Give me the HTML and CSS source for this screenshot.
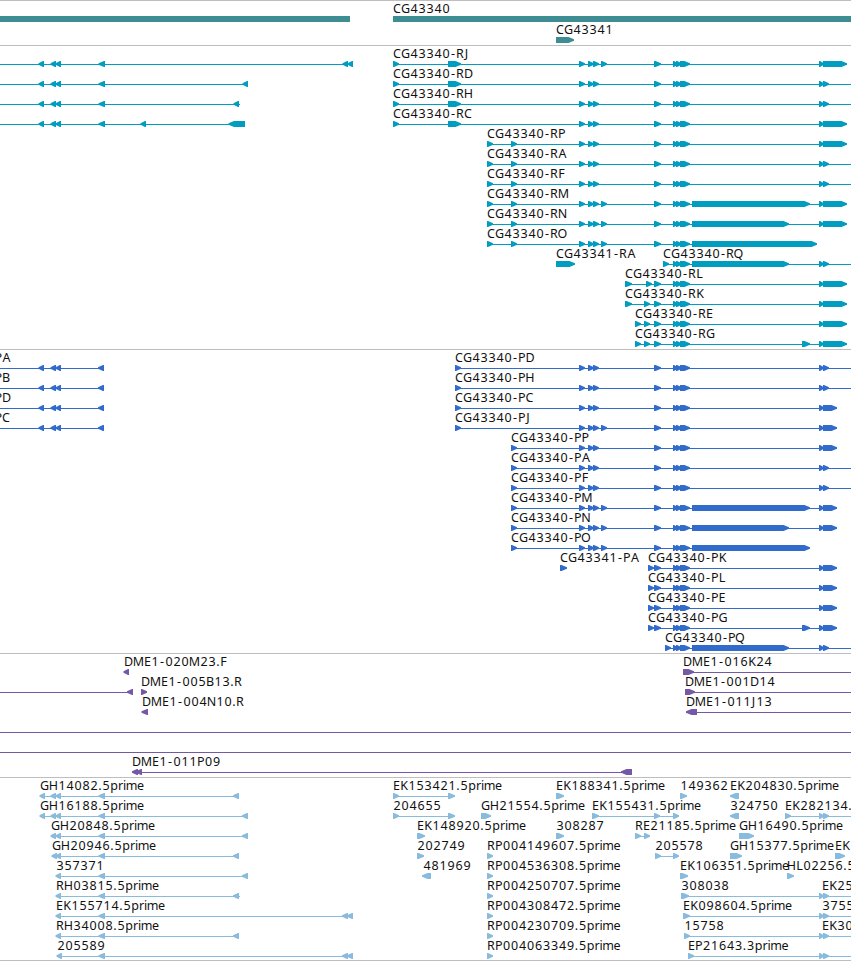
FILE: index.html
```html
<!DOCTYPE html>
<html lang="en">
  <head>
    <meta charset="UTF-8" />
    <meta name="viewport" content="width=device-width, initial-scale=1.0" />
    <title>Genome Browser</title>
    <link rel="stylesheet" href="styles.css">
  </head>
  <body>
    <main class="browser">
      <section class="track track-gene" id="genes"></section>
      <section class="track track-transcript" id="transcripts"></section>
      <section class="track track-cds" id="cds"></section>
      <section class="track track-bac" id="bacs"></section>
      <section class="track track-est" id="ests"></section>
    </main>
    <script src="script.js"></script>
  </body>
</html>
```

FILE: styles.css
```css
* {
  margin: 0;
  padding: 0;
  box-sizing: border-box;
}
body {
  background: #fff;
  overflow: hidden;
}
.browser {
  display: flex;
  flex-direction: column;
  width: 851px;
  height: 961px;
  border-bottom: 1px solid #bebebe;
}
.track {
  flex: none;
  border-top: 1px solid #bebebe;
  overflow: hidden;
}
.track svg {
  display: block;
  width: 100%;
  height: 100%;
}
.track-gene {
  height: 45px;
  color: #3e8d93;
}
.track-transcript {
  height: 304px;
  color: #009dc0;
}
.track-cds {
  height: 304px;
  color: #316ccc;
}
.track-bac {
  height: 124px;
  color: #7558a6;
}
.track-est {
  height: 183px;
  color: #88bbdd;
}
.line,
.block {
  fill: currentColor;
}
.line {
  shape-rendering: crispEdges;
}
.label {
  font-family: "Noto Sans", "Open Sans", sans-serif;
  font-size: 12.5px;
  fill: #111;
  text-anchor: middle;
}
```

FILE: script.js
```js
const SVG_NS = "http://www.w3.org/2000/svg";
const EDGE = 860; // just past the right side of the view

// label cell widths
const WIDTHS = {
  C: 8, G: 9, R: 8, P: 7.5, D: 9, H: 9, J: 5, A: 9, F: 7, M: 11, N: 9, O: 9,
  Q: 9, L: 7, K: 8, E: 7, B: 8, "-": 6, ".": 4, p: 8, r: 5, i: 3, m: 11, e: 7,
};

function add(parent, name, attrs) {
  const node = document.createElementNS(SVG_NS, name);
  for (const key in attrs) node.setAttribute(key, attrs[key]);
  parent.appendChild(node);
  return node;
}

function drawLabel(svg, text, x, top) {
  const xs = [];
  for (const ch of text) {
    const w = WIDTHS[ch] || 8;
    xs.push(x + w / 2);
    x += w;
  }
  add(svg, "text", { class: "label", x: xs.join(" "), y: top + 12 }).textContent = text;
}

// block with a pointed end, dir 1 = right, -1 = left
function drawBlock(svg, a, b, dir, top) {
  const y = top + 15;
  const head = Math.min(5.5, b - a - 1);
  const base = dir > 0 ? a : b;
  const neck = dir > 0 ? b - head : a + head;
  const tip = dir > 0 ? b : a;
  const points = [
    [base, y], [neck, y], [tip, y + 2.3], [tip, y + 3.7], [neck, y + 6], [base, y + 6],
  ];
  add(svg, "polygon", { class: "block", points: points.join(" ") });
}

// rows: list of features [label, start, end, dir, blocks, label x]
function drawTrack(id, rows, step = 20) {
  const svg = add(document.getElementById(id), "svg", {});
  rows.forEach((features, i) => {
    const top = i * step;
    features.forEach(([label, start, end, dir, blocks, labelX = start]) => {
      add(svg, "rect", { class: "line", x: start, y: top + 18, width: end - start, height: 1 });
      blocks.forEach(([a, b]) => drawBlock(svg, a, b, dir, top));
      if (label) drawLabel(svg, label, labelX, top);
    });
  });
}

// exons shared by the CG43340 isoforms
const A = [[579, 585], [588, 594], [593, 599]];
const B = [[601, 607]];
const C = [[654, 661], [673, 678], [676, 682], [680, 690]];
const SMALL = [[819, 824], [823, 829]];
const TAIL = [[819, 824], [823, 847]];
const CDS_TAIL = [[819, 824], [823, 837]];
const J = [[393, 399], [448, 461]];
const P = [[487, 493], [511, 517]];
const LEFT = [[38.5, 44], [50.5, 56], [55.5, 61]];

drawTrack("genes", [
  [["", -10, 350, -1, [[-10, 350]]], ["CG43340", 393, EDGE, 1, [[393, EDGE]]]],
  [["CG43341", 556, 574, 1, [[556, 574]]]],
], 21);

drawTrack("transcripts", [
  [["", -10, 353, -1, [...LEFT, [98.5, 105], [342.5, 348], [347.5, 353]]],
   ["CG43340-RJ", 393, 847, 1, [...J, ...A, ...B, ...C, ...TAIL]]],
  [["", -10, 248, -1, [...LEFT, [98.5, 105], [242.5, 248]]],
   ["CG43340-RD", 393, EDGE, 1, [...J, ...A, ...C, ...SMALL]]],
  [["", -10, 240, -1, [...LEFT, [98.5, 105], [233.5, 239]]],
   ["CG43340-RH", 393, EDGE, 1, [...J, ...A, ...C, ...SMALL]]],
  [["", -10, 245, -1, [...LEFT, [98.5, 105], [140.5, 146], [228.5, 245]]],
   ["CG43340-RC", 393, 847, 1, [...J, ...A, ...C, ...TAIL]]],
  [["CG43340-RP", 487, 846, 1, [...P, ...A, ...C, ...TAIL]]],
  [["CG43340-RA", 487, EDGE, 1, [...P, ...A, ...C, ...SMALL]]],
  [["CG43340-RF", 487, EDGE, 1, [...P, ...A, ...C, ...SMALL]]],
  [["CG43340-RM", 487, 846, 1, [...P, ...A, ...B, ...C, [692, 810], ...TAIL]]],
  [["CG43340-RN", 487, 846, 1, [...P, ...A, ...B, ...C, [692, 789], ...TAIL]]],
  [["CG43340-RO", 487, 816, 1, [...P, ...A, ...B, ...C, [692, 817]]]],
  [["CG43341-RA", 556, 574, 1, [[556, 575]]],
   ["CG43340-RQ", 663, EDGE, 1, [[663, 669], ...C.slice(1), [692, 789], ...SMALL]]],
  [["CG43340-RL", 625, 847, 1, [[625, 632], [646, 652], ...C, ...TAIL]]],
  [["CG43340-RK", 625, 847, 1, [[625, 632], [644, 650], ...C, ...TAIL]]],
  [["CG43340-RE", 635, 847, 1, [[635, 641], [644, 650], ...C, ...TAIL]]],
  [["CG43340-RG", 635, 847, 1, [[635, 641], [644, 650], ...C, [802, 810], ...TAIL]]],
]);

const leftCds = (name) => [name, -10, 104, -1, [...LEFT, [98, 104]], -5.5];

drawTrack("cds", [
  [leftCds("PA"), ["CG43340-PD", 455, EDGE, 1, [[455, 461], ...A, ...C, ...SMALL]]],
  [leftCds("PB"), ["CG43340-PH", 455, EDGE, 1, [[455, 461], ...A, ...C, ...SMALL]]],
  [leftCds("PD"), ["CG43340-PC", 455, 837, 1, [[455, 461], ...A, ...C, ...CDS_TAIL]]],
  [leftCds("PC"), ["CG43340-PJ", 455, 837, 1, [[455, 461], ...A, ...B, ...C, ...CDS_TAIL]]],
  [["CG43340-PP", 511, 837, 1, [[511, 517], ...A, ...C, ...CDS_TAIL]]],
  [["CG43340-PA", 511, EDGE, 1, [[511, 517], ...A, ...C, ...SMALL]]],
  [["CG43340-PF", 511, EDGE, 1, [[511, 517], ...A, ...C, ...SMALL]]],
  [["CG43340-PM", 511, 837, 1, [[511, 517], ...A, ...B, ...C, [692, 810], ...CDS_TAIL]]],
  [["CG43340-PN", 511, 837, 1, [[511, 517], ...A, ...B, ...C, [692, 789], ...CDS_TAIL]]],
  [["CG43340-PO", 511, 809, 1, [[511, 517], ...A, ...B, ...C, [692, 810]]]],
  [["CG43341-PA", 560, 566, 1, [[560, 567]]],
   ["CG43340-PK", 648, 837, 1, [[648, 654], ...C, ...CDS_TAIL]]],
  [["CG43340-PL", 648, 837, 1, [[648, 654], ...C, ...CDS_TAIL]]],
  [["CG43340-PE", 648, 837, 1, [[648, 654], ...C, ...CDS_TAIL]]],
  [["CG43340-PG", 648, 837, 1, [[648, 654], ...C, [802, 810], ...CDS_TAIL]]],
  [["CG43340-PQ", 665, EDGE, 1, [[665, 671], ...C.slice(1), [692, 789], ...SMALL]]],
]);

drawTrack("bacs", [
  [["DME1-020M23.F", 124, 129, -1, [[123.5, 129]]],
   ["DME1-016K24", 683, EDGE, 1, [[683, 694]]]],
  [["", -10, 133, -1, [[127, 133]]],
   ["DME1-005B13.R", 141, 146, 1, [[141, 147]]],
   ["DME1-001D14", 685, EDGE, 1, [[685, 695]]]],
  [["DME1-004N10.R", 142, 148, -1, [[141.5, 148]]],
   ["DME1-011J13", 686, EDGE, -1, [[686, 697]]]],
  [["", -10, EDGE, -1, []]],
  [["", -10, EDGE, -1, []]],
  [["DME1-011P09", 132, 632, -1, [[132, 138], [136, 142], [621, 632]]]],
]);

const T = [98.5, 105];
const rp = (n) => [`RP00${n}.5prime`, 487, 492, 1, [[487, 493]]];

drawTrack("ests", [
  [["GH14082.5prime", 40, 239, -1, [[39.5, 45], [50.5, 56], [55.5, 61], T, [233, 239]]],
   ["EK153421.5prime", 393, 455, 1, [[393, 399], [448, 455]]],
   ["EK188341.5prime", 556, 563, 1, [[556, 564]]],
   ["149362", 680, 686, 1, [[680, 687]]],
   ["EK204830.5prime", 731, 739, -1, [[730, 739]], 730]],
  [["GH16188.5prime", 40, 248, -1, [[39.5, 45], [50.5, 56], [55.5, 61], T, [242, 248]]],
   ["204655", 393, 455, 1, [[393, 399], [448, 455]]],
   ["GH21554.5prime", 481, 489, 1, [[481, 491]]],
   ["EK155431.5prime", 592, 678, 1, [[592, 599], [654, 660], [673, 679]]],
   ["324750", 731, 739, -1, [[730, 739]], 730],
   ["EK282134.", 785, EDGE, 1, [[785, 791], ...SMALL]]],
  [["GH20848.5prime", 51, 248, -1, [[50.5, 56], [55.5, 61], T, [242, 248]]],
   ["EK148920.5prime", 417, 423, 1, [[417, 425]]],
   ["308287", 556, 562, 1, [[556, 564]]],
   ["RE21185.5prime", 635, 649, 1, [[635, 641], [644, 650]]],
   ["GH16490.5prime", 739, 752, 1, [[739, 754]]]],
  [["GH20946.5prime", 52, 239, -1, [[51.5, 57], [55.5, 61], T, [233, 239]]],
   ["202749", 417, 423, 1, [[417, 424]]],
   rp("4149607"),
   ["205578", 655, 678, 1, [[655, 661], [673, 679]]],
   ["GH15377.5prime", 730, 740, 1, [[730, 742]]],
   ["EK", 835, 844, 1, [[835, 845]]]],
  [["357371", 56, 248, -1, [[55.5, 61], T, [242, 248]]],
   ["481969", 424, 431, -1, [[422, 431]], 423],
   rp("4536308"),
   ["EK106351.5prime", 680, 686, 1, [[680, 688]]],
   ["HL02256.5", 787, 792, 1, [[787, 794]]]],
  [["RH03815.5prime", 56, 240, -1, [[55.5, 61], T, [233, 239]]],
   rp("4250707"),
   ["308038", 681, EDGE, 1, [[681, 689], ...SMALL]],
   ["EK25", 822, EDGE, 1, []]],
  [["EK155714.5prime", 56, 353, -1, [[55.5, 61], T, [342, 348], [347, 353]]],
   rp("4308472"),
   ["EK098604.5prime", 683, EDGE, 1, [[683, 690], ...SMALL]],
   ["3755", 822, EDGE, 1, []]],
  [["RH34008.5prime", 56, 239, -1, [[55.5, 61], T, [233, 239]]],
   rp("4230709"),
   ["15758", 684, EDGE, 1, [[684, 690], ...SMALL]],
   ["EK30", 822, EDGE, 1, []]],
  [["205589", 57, 353, -1, [[56.5, 62], T, [342, 348], [347, 353]]],
   rp("4063349"),
   ["EP21643.3prime", 688, EDGE, 1, [[688, 694], ...SMALL]]],
]);
```
